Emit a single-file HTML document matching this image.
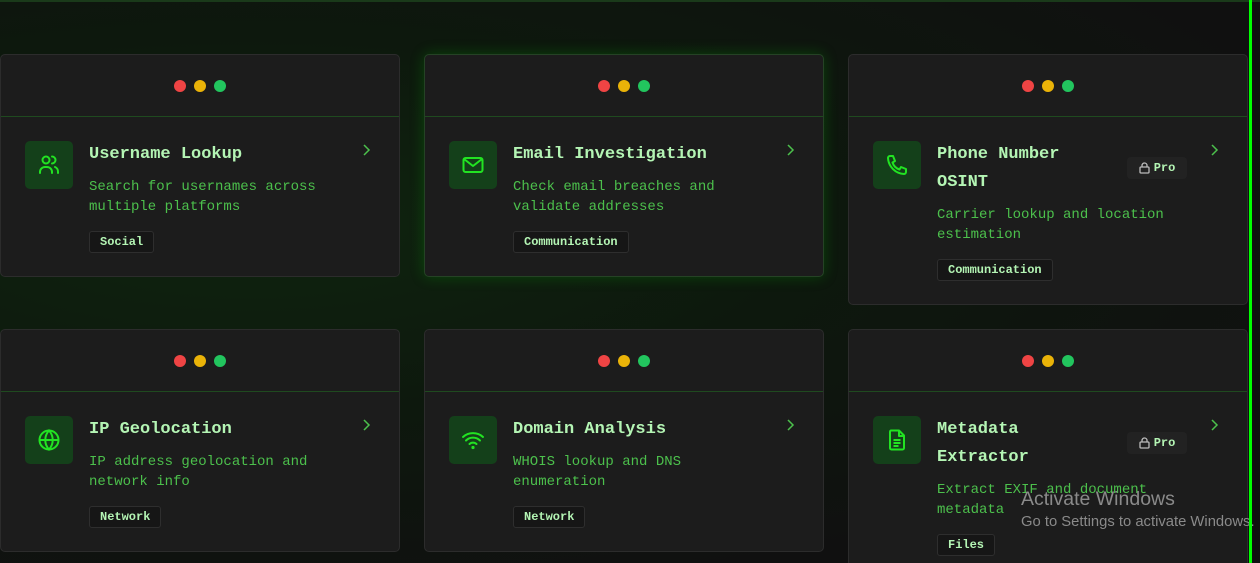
<!DOCTYPE html>
<html style="width:1260px;height:563px;overflow:hidden"><head><style>
*{margin:0;padding:0;box-sizing:border-box}
body{width:1260px;height:563px;overflow:hidden;background:radial-gradient(ellipse at 20% 40%,#0f240f 0%,#0d180d 40%,#101010 80%);font-family:"Liberation Mono",monospace;position:relative}
.topline{position:absolute;left:0;top:0;width:1260px;height:2px;background:#1a3a1a}
.gbar{position:absolute;left:1249px;top:0;width:3px;height:563px;background:#00ff00}
.card{position:absolute;width:400px;background:#1c1c1c;border:1px solid #2c2c2c;border-radius:5px;overflow:hidden}
.card.glow{box-shadow:0 0 14px rgba(0,200,0,.25);border-color:#254225}
.hd{height:62px;border-bottom:1px solid #1f4a1f;display:flex;justify-content:center;align-items:center;gap:8px}
.hd span{width:12px;height:12px;border-radius:50%}
.r{background:#ef4444}.y{background:#eab308}.g{background:#22c55e}
.ic{position:absolute;left:24px;top:86px;width:48px;height:48px;border-radius:5px;background:#14401a;display:flex;align-items:center;justify-content:center}
.tt{position:absolute;left:88px;top:86px;font-size:17px;font-weight:bold;color:#b4f5b4;line-height:28px;width:200px}
.ds{position:absolute;left:88px;font-size:14px;color:#4cc04c;line-height:20px;width:260px}
.tag{position:absolute;left:88px;font-size:12px;font-weight:bold;color:#b4f5b4;border:1px solid #2e2e2e;background:#161616;border-radius:3px;padding:3px 10px;line-height:14px}
.ch{position:absolute;left:358px;top:88px}
.pro{position:absolute;left:278px;top:102px;width:60px;height:22px;background:#222;border-radius:4px;font-size:12px;font-weight:bold;color:#b4f5b4;display:flex;align-items:center;justify-content:center;gap:4px}
.wm{position:absolute;left:1021px;top:488px;color:#8a8a8a;font-family:"Liberation Sans",sans-serif;white-space:nowrap}
</style></head><body>
<div class="topline"></div>

<div class="card" style="left:0;top:54px;height:223px">
<div class="hd"><span class="r"></span><span class="y"></span><span class="g"></span></div>
<div class="ic"><svg width="24" height="24" viewBox="0 0 24 24" fill="none" stroke="#22e322" stroke-width="2" stroke-linecap="round"><circle cx="9" cy="7" r="3.5"/><path d="M3 20v-1a5 5 0 0 1 5-5h2a5 5 0 0 1 5 5v1"/><path d="M15 3.5a3.5 3.5 0 0 1 0 7"/><path d="M18 14a5 5 0 0 1 3 5v1"/></svg></div>
<div class="tt">Username Lookup</div>
<div class="ds" style="top:122px">Search for usernames across multiple platforms</div>
<div class="tag" style="top:176px">Social</div>
<svg class="ch" width="14" height="14" viewBox="0 0 14 14" fill="none" stroke="#4cc04c" stroke-width="1.5"><path d="M5 2l5 5-5 5"/></svg>
</div>

<div class="card glow" style="left:424px;top:54px;height:223px">
<div class="hd"><span class="r"></span><span class="y"></span><span class="g"></span></div>
<div class="ic"><svg width="24" height="24" viewBox="0 0 24 24" fill="none" stroke="#22e322" stroke-width="2" stroke-linejoin="round"><rect x="2.5" y="5" width="19" height="14" rx="2"/><path d="M3 6l9 7 9-7"/></svg></div>
<div class="tt">Email Investigation</div>
<div class="ds" style="top:122px">Check email breaches and validate addresses</div>
<div class="tag" style="top:176px">Communication</div>
<svg class="ch" width="14" height="14" viewBox="0 0 14 14" fill="none" stroke="#4cc04c" stroke-width="1.5"><path d="M5 2l5 5-5 5"/></svg>
</div>

<div class="card" style="left:848px;top:54px;height:251px">
<div class="hd"><span class="r"></span><span class="y"></span><span class="g"></span></div>
<div class="ic"><svg width="24" height="24" viewBox="0 0 24 24" fill="none" stroke="#22e322" stroke-width="2" stroke-linejoin="round"><path d="M5 3h3l2 5-2.5 1.5a11 11 0 0 0 7 7L16 14l5 2v3a2 2 0 0 1-2 2A17 17 0 0 1 3 5a2 2 0 0 1 2-2z"/></svg></div>
<div class="tt">Phone Number<br>OSINT</div>
<div class="pro"><svg width="11" height="12" viewBox="0 0 11 12" fill="none" stroke="#bbb" stroke-width="1.3"><rect x="1" y="5" width="9" height="6" rx="1"/><path d="M3 5V3.5a2.5 2.5 0 0 1 5 0V5"/></svg>Pro</div>
<div class="ds" style="top:150px">Carrier lookup and location estimation</div>
<div class="tag" style="top:204px">Communication</div>
<svg class="ch" width="14" height="14" viewBox="0 0 14 14" fill="none" stroke="#4cc04c" stroke-width="1.5"><path d="M5 2l5 5-5 5"/></svg>
</div>

<div class="card" style="left:0;top:329px;height:223px">
<div class="hd"><span class="r"></span><span class="y"></span><span class="g"></span></div>
<div class="ic"><svg width="24" height="24" viewBox="0 0 24 24" fill="none" stroke="#22e322" stroke-width="2"><circle cx="12" cy="12" r="9.5"/><path d="M2.5 12h19"/><path d="M12 2.5a14 14 0 0 1 0 19a14 14 0 0 1 0-19z"/></svg></div>
<div class="tt">IP Geolocation</div>
<div class="ds" style="top:122px">IP address geolocation and network info</div>
<div class="tag" style="top:176px">Network</div>
<svg class="ch" width="14" height="14" viewBox="0 0 14 14" fill="none" stroke="#4cc04c" stroke-width="1.5"><path d="M5 2l5 5-5 5"/></svg>
</div>

<div class="card" style="left:424px;top:329px;height:223px">
<div class="hd"><span class="r"></span><span class="y"></span><span class="g"></span></div>
<div class="ic"><svg width="24" height="24" viewBox="0 0 24 24" fill="none" stroke="#22e322" stroke-width="2" stroke-linecap="round"><path d="M2 9a15 15 0 0 1 20 0"/><path d="M5 12.5a10 10 0 0 1 14 0"/><path d="M8.5 16a5 5 0 0 1 7 0"/><circle cx="12" cy="19.5" r=".6" fill="#22e322"/></svg></div>
<div class="tt">Domain Analysis</div>
<div class="ds" style="top:122px">WHOIS lookup and DNS enumeration</div>
<div class="tag" style="top:176px">Network</div>
<svg class="ch" width="14" height="14" viewBox="0 0 14 14" fill="none" stroke="#4cc04c" stroke-width="1.5"><path d="M5 2l5 5-5 5"/></svg>
</div>

<div class="card" style="left:848px;top:329px;height:234px;border-bottom:none;border-radius:5px 5px 0 0">
<div class="hd"><span class="r"></span><span class="y"></span><span class="g"></span></div>
<div class="ic"><svg width="24" height="24" viewBox="0 0 24 24" fill="none" stroke="#22e322" stroke-width="2" stroke-linejoin="round"><path d="M6 2.5h8l5 5V20a1.5 1.5 0 0 1-1.5 1.5h-11A1.5 1.5 0 0 1 5 20V4a1.5 1.5 0 0 1 1-1.5z"/><path d="M14 2.5V8h5"/><path d="M8.5 12h7M8.5 15h7M8.5 18h5"/></svg></div>
<div class="tt">Metadata<br>Extractor</div>
<div class="pro"><svg width="11" height="12" viewBox="0 0 11 12" fill="none" stroke="#bbb" stroke-width="1.3"><rect x="1" y="5" width="9" height="6" rx="1"/><path d="M3 5V3.5a2.5 2.5 0 0 1 5 0V5"/></svg>Pro</div>
<div class="ds" style="top:150px">Extract EXIF and document metadata</div>
<div class="tag" style="top:204px">Files</div>
<svg class="ch" width="14" height="14" viewBox="0 0 14 14" fill="none" stroke="#4cc04c" stroke-width="1.5"><path d="M5 2l5 5-5 5"/></svg>
</div>

<div class="wm" style="font-size:19.5px">Activate Windows</div>
<div class="wm" style="top:514px;font-size:14.8px">Go to Settings to activate Windows.</div>
<div class="gbar"></div>
</body></html>
